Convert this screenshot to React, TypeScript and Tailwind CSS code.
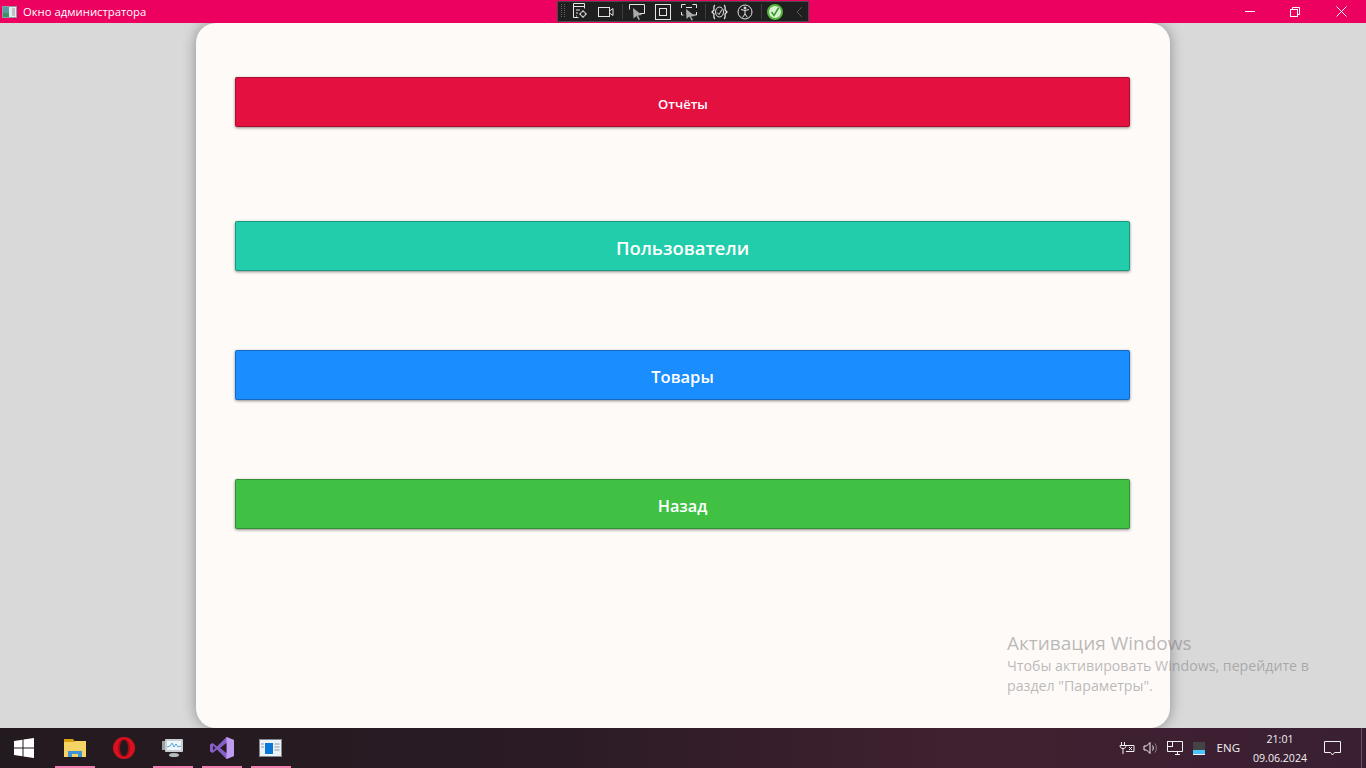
import React from "react";

const font = { fontFamily: '"Open Sans", "Noto Sans", sans-serif' };

const MenuButton = ({ label, className }: { label: string; className: string }) => (
  <button
    className={`h-[50px] w-full rounded-[2px] border border-black/25 font-semibold text-white shadow-[0_1px_3px_rgba(0,0,0,0.45)] ${className}`}
  >
    {label}
  </button>
);

const AppIcon = () => (
  <svg width="15" height="12" viewBox="0 0 15 12">
    <rect width="15" height="12" fill="#8f9ca4" />
    <rect x="1" y="1" width="13" height="10" fill="#e6ebec" />
    <rect x="1" y="1" width="6" height="6" fill="#5a98a4" />
    <rect x="1" y="7" width="6" height="4" fill="#3f8f64" />
    <rect x="10" y="2" width="3" height="8" fill="#b9c3c8" />
  </svg>
);

const DebugToolbar = () => (
  <div className="flex h-[21px] w-[252px] items-center border border-[#4a4a4a] bg-[#1f1f1f] text-[#e4e4e4]">
    <svg width="250" height="19" viewBox="0 0 250 19" fill="none" stroke="currentColor" strokeWidth="1">
      <path d="M3.500 2v14M6.500 2v14" stroke="#666" strokeDasharray="1 1" />
      <path d="M64.500 2v15M147.500 2v15M203.500 2v15" stroke="#3c3c3c" />
      <g transform="translate(0 -1)">
        <path d="M20.500 16.500h-5v-14h11v5M15.500 5.500h11M18 9h4M18 12h2M18 15h1" />
        <circle cx="25" cy="13" r="2.500" />
        <path d="M25 9v1.500M25 15.500V17M21 13h1.500M27.500 13H29" />
        <rect x="40.500" y="6.500" width="11" height="9" />
        <path d="M51.500 10l3.500-2.500v7l-3.500-2.500" />
        <path d="M71.500 8.500v-5h15v9h-5" />
        <path d="M75 7l9 7-4 .5 2 4-1.500 .5-2-4-3 2.500z" fill="#aaa" stroke="none" />
        <rect x="97.500" y="3.500" width="15" height="15" />
        <rect x="101.500" y="7.500" width="7" height="7" />
        <path d="M123.500 7V3.500h4M134.500 3.500h4V7M123.500 11v3h2M138.500 11v3h-4M128 6.500h6" />
        <path d="M128 8l9 7-4 .5 2 3.500-1.500 .5-2-4-3 2.500z" fill="#aaa" stroke="none" />
        <path d="M157 4c-2 1-1 3-1 5l-2 2 2 2c0 2-1 4 1 5M166 4c2 1 1 3 1 5l2 2-2 2c0 2 1 4-1 5" strokeWidth="1.300" />
        <ellipse cx="161.500" cy="11" rx="4" ry="5" />
        <path d="M159 11.500l2 2 3-5" />
        <circle cx="187" cy="11" r="7" />
        <circle cx="187" cy="7" r="1" fill="currentColor" />
        <path d="M183 8.500l4 1 4-1M187 9.500v3.500l-2.500 3.500M187 13l2.500 3.500" />
        <circle cx="217" cy="11" r="7" fill="#d8efd2" stroke="#55b53a" strokeWidth="2" />
        <path d="M213.500 11l2.500 3.500 4.500-7.500" stroke="#2f9a22" strokeWidth="1.500" />
        <path d="M244 6l-5 5 5 5" stroke="#555" />
      </g>
    </svg>
  </div>
);

const TitleBar = () => (
  <div className="relative flex h-[23px] shrink-0 items-center bg-[#ec0060] pl-[2px] text-white">
    <AppIcon />
    <span className="ml-[6px] text-[11.300px] leading-none">Окно администратора</span>
    <div className="absolute left-[557px] top-[1px]">
      <DebugToolbar />
    </div>
    <div className="ml-auto flex items-center">
      <div className="flex w-[46px] justify-center">
        <div className="h-px w-[10px] bg-white" />
      </div>
      <div className="flex w-[46px] justify-center pr-[2px]">
        <svg width="10" height="10" viewBox="0 0 10 10" fill="none" stroke="white">
          <path d="M2.500 2.500v-2h7v7h-2" />
          <rect x="0.500" y="2.500" width="7" height="7" />
        </svg>
      </div>
      <div className="flex w-[46px] justify-center pr-[1px]">
        <svg width="11" height="11" viewBox="0 0 11 11" stroke="white">
          <path d="M0.500 0.500l10 10M10.500 0.500l-10 10" />
        </svg>
      </div>
      <div className="w-[1px]" />
    </div>
  </div>
);

const TaskSlot = ({ active, children }: { active?: boolean; children: React.ReactNode }) => (
  <div className="relative flex h-10 w-[49px] items-center justify-center">
    {children}
    {active && <div className="absolute bottom-0 left-[4.500px] h-[2px] w-10 bg-[#f27fb2]" />}
  </div>
);

const Taskbar = () => (
  <div className="flex h-10 shrink-0 items-center bg-[linear-gradient(90deg,#231a1f_0%,#2a1b24_40%,#40212f_70%,#3a1f33_100%)]">
    <div className="flex w-[50px] justify-center pr-[2px]">
      <svg width="20" height="20" viewBox="0 0 20 20" fill="white">
        <path d="M0 3l8.500-1.200v7.700H0zM9.500 1.600L20 0v9.500H9.500zM0 10.500h8.500v7.700L0 17zM9.500 10.500H20V20L9.500 18.400z" />
      </svg>
    </div>
    <TaskSlot active>
      <svg width="22" height="20" viewBox="0 0 22 20">
        <path d="M0 1h8l2 2h12v16H0z" fill="#f6d365" />
        <path d="M0 1h9l2 3H0z" fill="#d9a20b" />
        <path d="M4 19v-6h14v6h-4v-3H8v3z" fill="#3f93d6" />
      </svg>
    </TaskSlot>
    <TaskSlot>
      <svg width="22" height="22" viewBox="0 0 22 22">
        <ellipse cx="11" cy="11" rx="11" ry="11" fill="#d8101f" />
        <ellipse cx="11" cy="11" rx="6" ry="9" fill="#a30c18" />
        <ellipse cx="11" cy="11" rx="4" ry="8" fill="#231a1f" />
      </svg>
    </TaskSlot>
    <TaskSlot active>
      <svg width="22" height="20" viewBox="0 0 22 20">
        <rect x="3" y="1" width="18" height="13" rx="1" fill="#c9ced2" />
        <rect x="5" y="3" width="14" height="9" fill="#eef6fb" />
        <path d="M5 9l3-1 2-3 2 4 2-3 2 3 3-1" stroke="#5aa7dc" fill="none" />
        <rect x="0" y="3" width="3" height="9" fill="#9aa2a6" />
        <ellipse cx="12" cy="17" rx="5" ry="2" fill="#b5bcc0" />
      </svg>
    </TaskSlot>
    <TaskSlot active>
      <svg width="24" height="24" viewBox="0 0 24 24">
        <path d="M16.500 1L24 4v16l-7.500 3L7 13.500 2.500 17 0 15.500v-7L2.500 7 7 10.500z" fill="#8661c5" />
        <path d="M16.500 1L24 4v16l-7.500 3z" fill="#c09cf0" />
        <path d="M16.500 7v10L10 12z" fill="#2a1b24" />
        <path d="M3 9.500v5l2.500-2.500z" fill="#2a1b24" />
      </svg>
    </TaskSlot>
    <TaskSlot active>
      <svg width="23" height="18" viewBox="0 0 23 18">
        <rect width="23" height="18" fill="#7d8a94" />
        <rect x="1" y="1" width="21" height="16" fill="#eef2f5" />
        <rect x="6" y="4" width="8" height="11" fill="#0a78d7" />
        <path d="M15.500 5h5M15.500 8h5M15.500 11h5M2 5h3M2 8h3" stroke="#8a98a2" />
      </svg>
    </TaskSlot>
    <div className="ml-auto flex h-full items-center text-[#f2f2f2]">
      <svg width="16" height="12" viewBox="0 0 16 12" fill="none" stroke="currentColor" className="mr-[8px]">
        <path d="M2.500 0v3M5.500 0v3M1 3.500h6c0 2-1 3-3 3s-3-1-3-3zM4 7v5" />
        <path d="M7 3.500h8v6H7" />
        <path d="M10 5l3 3M13 5l-3 3" />
      </svg>
      <svg width="16" height="14" viewBox="0 0 16 14" fill="none" stroke="currentColor" className="mr-[8px]">
        <path d="M1 5h2.500L7 1.500v11L3.500 9H1z" />
        <path d="M9.500 4.500c1 1.500 1 3.500 0 5" />
        <path d="M12 2.500c1.800 2.500 1.800 6.500 0 9" stroke="#8a7a85" />
      </svg>
      <svg width="16" height="14" viewBox="0 0 16 14" fill="none" stroke="currentColor" className="mr-[10px]">
        <path d="M5.500 0.500h10v10h-15v-6" />
        <rect x="0.500" y="0.500" width="5" height="5" fill="#3a1f33" />
        <path d="M8 13.500h5M10.500 10.500v3" />
      </svg>
      <svg width="12" height="13" viewBox="0 0 12 13" className="mr-[12px]">
        <rect width="12" height="13" fill="#444" />
        <rect y="8" width="12" height="5" fill="#4cc2ff" />
        <rect y="12" width="12" height="1" fill="#eee" />
      </svg>
      <span className="mr-[12px] text-[11.500px]">ENG</span>
      <div className="mr-[3px] flex w-[56px] flex-col items-center gap-[5px] text-[10.600px] leading-[14px]">
        <span>21:01</span>
        <span>09.06.2024</span>
      </div>
      <div className="mr-[8px] flex w-[42px] justify-center">
        <svg width="17" height="15" viewBox="0 0 17 15" fill="none" stroke="currentColor">
          <path d="M0.500 0.500h16v11h-6l-2 2.500-2-2.500h-6z" />
        </svg>
      </div>
      <div className="h-full w-[5px] border-l border-[#6a5562]" />
    </div>
  </div>
);

export default function App() {
  return (
    <div className="relative flex h-[768px] w-[1366px] flex-col overflow-hidden bg-[#d9d9d9]" style={font}>
      <TitleBar />
      <main className="flex min-h-0 flex-1 pl-[196px]">
        <div className="flex h-full w-[974px] flex-col rounded-[20px] bg-[#fefaf8] pl-[39px] pr-[40px] pt-[54px] shadow-[0_0_14px_rgba(0,0,0,0.35)]">
          <MenuButton label="Отчёты" className="bg-[#e41040] pt-[5px] pl-[1px] text-[13px]" />
          <MenuButton label="Пользователи" className="mt-[94px] bg-[#21cdaa] pt-1 text-[18.400px]" />
          <MenuButton label="Товары" className="mt-[79px] bg-[#1a8dff] pt-1 text-[16.500px]" />
          <MenuButton label="Назад" className="mt-[79px] bg-[#40c144] pt-1 text-[16.300px]" />
        </div>
      </main>
      <Taskbar />
      <div className="absolute left-[1007px] top-[631px] text-[#777]/50">
        <div className="text-[19px] leading-[24px]">Активация Windows</div>
        <div className="mt-[1px] text-[14.200px] leading-[20px]">
          Чтобы активировать Windows, перейдите в
          <br />
          раздел "Параметры".
        </div>
      </div>
    </div>
  );
}
